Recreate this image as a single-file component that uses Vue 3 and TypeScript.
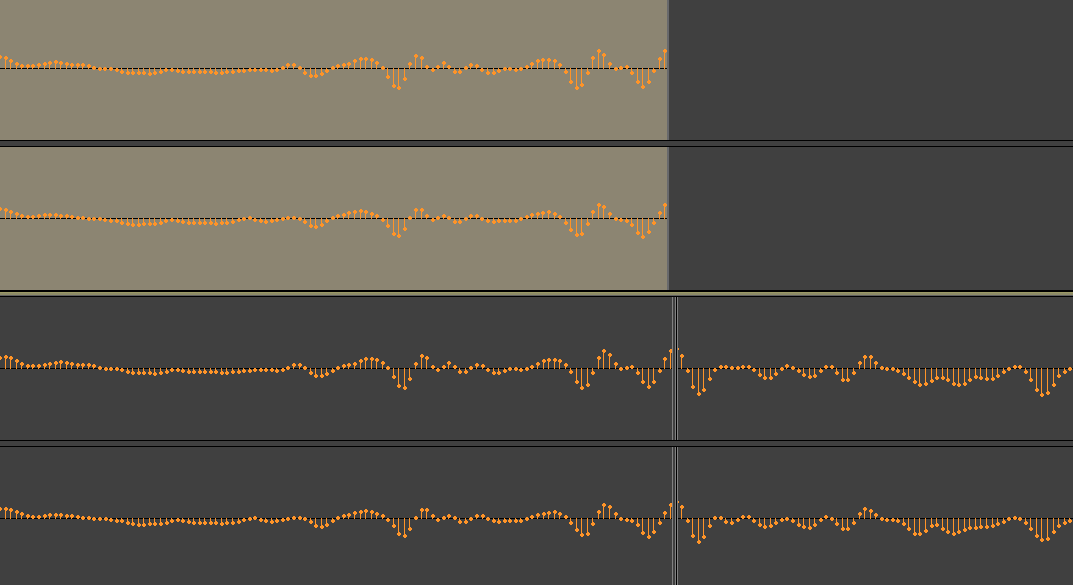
<script setup lang="ts">
interface Track {
  id: string
  label: string
  axis: number
  height: number
  phase: number
  levels: number[]
  selected: boolean
}

// Sample heights, measured downwards, with LEVEL_ZERO on the axis.
const LEVEL_ZERO = 68
const SAMPLE_STEP = 5.544

const upperLeft: number[] = [
  57, 58, 61, 64, 66, 66, 66, 65, 64, 63, 62, 63, 64, 65, 65, 65, 66, 68, 69, 69,
  69, 70, 72, 73, 73, 73, 73, 74, 73, 72, 70, 70, 71, 72, 72, 72, 72, 72, 72, 73,
  73, 72, 72, 71, 71, 70, 70, 70, 70, 71, 70, 68, 65, 65, 68, 73, 76, 76, 74, 71,
  68, 66, 65, 64, 61, 59, 59, 60, 63, 68, 77, 86, 88, 79, 64, 56, 58, 67, 70, 67,
  63, 67, 72, 72, 68, 65, 66, 70, 73, 73, 71, 69, 69, 70, 69, 67, 64, 61, 60, 60,
  61, 65, 72, 82, 88, 85, 73, 58, 51, 55, 64, 69, 68, 67, 73, 82, 87, 82, 71, 59,
  51,
]

const upperRight: number[] = [
  59, 60, 62, 64, 66, 67, 67, 66, 65, 65, 65, 66, 66, 67, 68, 68, 69, 69, 69, 70,
  71, 71, 73, 74, 75, 75, 74, 74, 74, 73, 71, 70, 71, 72, 73, 73, 73, 73, 73, 74,
  73, 73, 72, 70, 69, 68, 70, 71, 72, 71, 70, 69, 68, 68, 69, 72, 76, 77, 75, 71,
  68, 66, 65, 63, 62, 61, 62, 64, 66, 70, 76, 84, 86, 79, 68, 60, 60, 66, 70, 68,
  66, 68, 72, 72, 69, 66, 66, 69, 71, 72, 71, 71, 71, 71, 69, 67, 65, 64, 63, 62,
  64, 67, 73, 80, 85, 84, 74, 62, 55, 57, 64, 69, 70, 71, 75, 83, 87, 82, 73, 63,
  55,
]

const lowerLeft: number[] = [
  58, ...upperLeft,
  49, 56, 71, 87, 94, 90, 79, 70, 67, 67, 68, 68, 67, 67, 70, 75, 78, 78, 74, 69,
  66, 68, 71, 75, 77, 76, 71, 67, 67, 73, 80, 80, 73, 63, 57, 57, 63, 68, 69, 69,
  71, 74, 78, 82, 85, 84, 81, 78, 78, 80, 84, 85, 84, 80, 77, 78, 79, 79, 76, 72,
  69, 67, 67, 72, 80, 90, 95, 93, 85, 76, 72, 69,
]

const lowerRight: number[] = [
  59, ...upperRight,
  52, 57, 71, 86, 92, 87, 76, 68, 68, 72, 73, 70, 67, 67, 71, 75, 77, 76, 73, 70,
  69, 71, 75, 77, 78, 75, 70, 67, 69, 74, 79, 79, 73, 64, 59, 61, 65, 69, 70, 70,
  71, 74, 79, 84, 84, 81, 76, 75, 79, 82, 84, 82, 80, 78, 78, 77, 77, 76, 74, 72,
  69, 68, 69, 73, 79, 86, 90, 89, 82, 76, 73, 71,
]

const groups: { id: string; tracks: Track[] }[] = [
  {
    id: 'upper',
    tracks: [
      { id: 'ul', label: 'First clip, left channel', axis: 68, height: 140, phase: 0.16, levels: upperLeft, selected: true },
      { id: 'ur', label: 'First clip, right channel', axis: 71, height: 143, phase: 0.16, levels: upperRight, selected: true },
    ],
  },
  {
    id: 'lower',
    tracks: [
      { id: 'll', label: 'Second clip, left channel', axis: 71, height: 143, phase: 0.19, levels: lowerLeft, selected: false },
      { id: 'lr', label: 'Second clip, right channel', axis: 71, height: 138, phase: 0.19, levels: lowerRight, selected: false },
    ],
  },
]

const sampleX = (i: number, phase: number): number => Math.round(i * SAMPLE_STEP + phase)

function stems(t: Track): string {
  return t.levels
    .map((v, i) => {
      const top = Math.min(v, LEVEL_ZERO)
      const bottom = Math.max(v, LEVEL_ZERO + 1)
      return `M${sampleX(i, t.phase) - 1} ${t.axis + top - LEVEL_ZERO}h1v${bottom - top}h-1z`
    })
    .join('')
}

function dots(t: Track): string {
  return t.levels
    .map((v, i) => {
      const x = sampleX(i, t.phase)
      const y = t.axis + v - LEVEL_ZERO
      return `M${x - 1} ${y - 2}h2v1h1v2h-1v1h-2v-1h-1v-2h1z`
    })
    .join('')
}

const clipEnd = sampleX(upperLeft.length - 1, 0.16) + 4
</script>

<template>
  <main class="editor">
    <section v-for="g in groups" :key="g.id" class="group" :class="g.id">
      <div
        v-for="t in g.tracks"
        :key="t.id"
        class="track"
        :style="{ height: t.height + 'px' }"
      >
        <div
          class="clip"
          :class="{ selected: t.selected }"
          :style="{ width: t.selected ? clipEnd + 'px' : '100%' }"
        >
          <svg class="wave" role="img" :aria-label="t.label">
            <rect class="axis" x="0" :y="t.axis" width="100%" height="1" />
            <path class="sample" :d="stems(t)" />
            <path class="sample" :d="dots(t)" />
          </svg>
        </div>
        <div v-if="!t.selected" class="boundary"></div>
      </div>
    </section>
  </main>
</template>

<style scoped>
.editor {
  display: flex;
  flex-direction: column;
  min-height: 100vh;
  background: #404040;
}

.group {
  display: flex;
  flex-direction: column;
}

.track {
  position: relative;
  overflow: hidden;
}

.track + .track {
  margin-top: 7px;
  overflow: visible;
}

/* Divider between the two channels of a clip */
.track + .track::before {
  content: '';
  position: absolute;
  left: 0;
  right: 0;
  top: -7px;
  height: 7px;
  box-sizing: border-box;
  border-top: 1px solid #000;
  border-bottom: 1px solid #000;
  background: #404040;
}

.lower {
  border-top: 7px solid #000;
  border-image: linear-gradient(
      #000 0 2px,
      #9c9a66 2px 3px,
      #8e8c68 3px 5px,
      #606060 5px 6px,
      #000 6px 7px
    )
    7 0 0 0;
}

.clip {
  height: 100%;
  box-sizing: border-box;
}

.selected {
  background: #8c8572;
  border-right: 2px solid #68696c;
}

.wave {
  display: block;
  width: 100%;
  height: 100%;
  overflow: hidden;
}

.axis {
  fill: #000;
}

.sample {
  fill: #ff9428;
}

/* Edge lines where one clip meets the next */
.boundary {
  position: absolute;
  top: 0;
  bottom: 0;
  left: 672px;
  width: 6px;
  background: linear-gradient(
    to right,
    #808080 0 1px,
    #404040 1px 3px,
    #808080 3px 4px,
    #000 4px 5px,
    #808080 5px 6px
  );
}
</style>

<style>
body {
  background: #404040;
}
</style>
